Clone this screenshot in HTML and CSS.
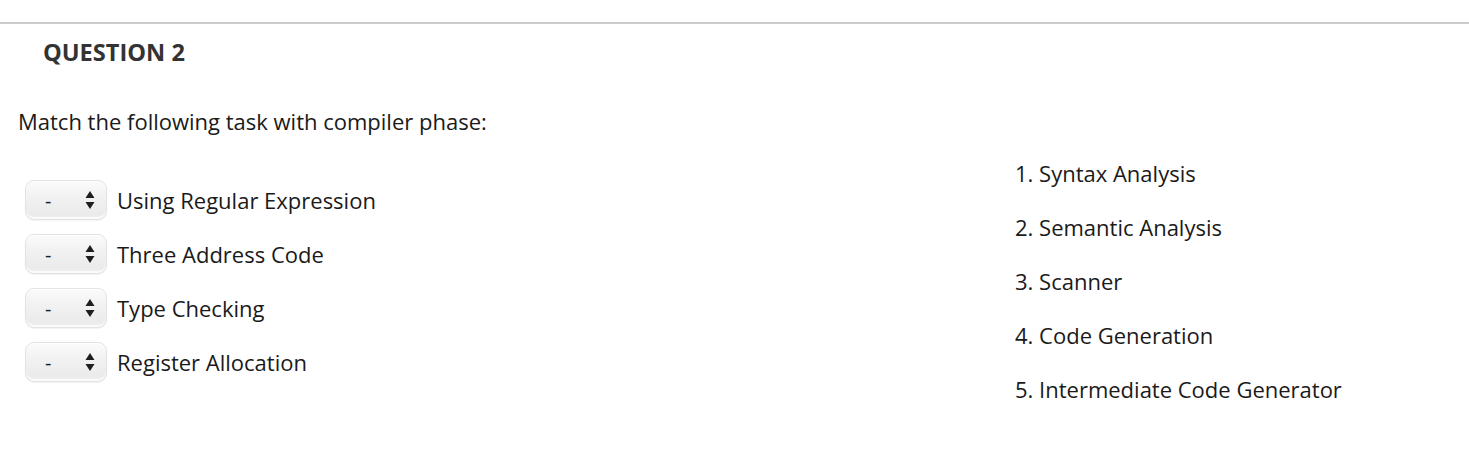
FILE: index.html
```html
<!DOCTYPE html>
<html>
<head>
<meta charset="utf-8">
<link rel="stylesheet" href="styles.css">
</head>
<body>
<div class="page">
  <div class="divider"></div>
  <h2 class="q-title">QUESTION 2</h2>
  <p class="q-text">Match the following task with compiler phase:</p>
  <div class="match">
    <div class="left">
      <div class="row"><div class="sel"><span class="dash">-</span><svg class="arrows" width="10" height="20" viewBox="0 0 10 20"><path d="M5 1 L9.5 8 L0.5 8 Z M5 19 L9.5 12 L0.5 12 Z" fill="#1e1e1e"/></svg></div><span class="label">Using Regular Expression</span></div>
      <div class="row"><div class="sel"><span class="dash">-</span><svg class="arrows" width="10" height="20" viewBox="0 0 10 20"><path d="M5 1 L9.5 8 L0.5 8 Z M5 19 L9.5 12 L0.5 12 Z" fill="#1e1e1e"/></svg></div><span class="label">Three Address Code</span></div>
      <div class="row"><div class="sel"><span class="dash">-</span><svg class="arrows" width="10" height="20" viewBox="0 0 10 20"><path d="M5 1 L9.5 8 L0.5 8 Z M5 19 L9.5 12 L0.5 12 Z" fill="#1e1e1e"/></svg></div><span class="label">Type Checking</span></div>
      <div class="row"><div class="sel"><span class="dash">-</span><svg class="arrows" width="10" height="20" viewBox="0 0 10 20"><path d="M5 1 L9.5 8 L0.5 8 Z M5 19 L9.5 12 L0.5 12 Z" fill="#1e1e1e"/></svg></div><span class="label">Register Allocation</span></div>
    </div>
    <ol class="right">
      <li>1. Syntax Analysis</li>
      <li>2. Semantic Analysis</li>
      <li>3. Scanner</li>
      <li>4. Code Generation</li>
      <li>5. Intermediate Code Generator</li>
    </ol>
  </div>
</div>
</body>
</html>
```
FILE: styles.css
```css
html, body {
  margin: 0;
  padding: 0;
  background: #fff;
}
body {
  font-family: "Open Sans", "Noto Sans", sans-serif;
  color: #1a1a1a;
}
.page {
  padding-top: 22px;
}
.divider {
  height: 2px;
  background: #cccccc;
}
.q-title {
  margin: 0;
  padding: 13px 0 0 43px;
  font-size: 23.6px;
  line-height: 30px;
  font-weight: 700;
  color: #333;
}
.q-text {
  margin: 0;
  padding: 39px 0 0 18px;
  font-size: 22px;
  line-height: 30px;
  color: #1a1a1a;
}
.match {
  display: flex;
  padding-top: 10px;
}
.left {
  width: 1015px;
  padding-top: 27px;
  box-sizing: border-box;
  padding-left: 25px;
}
.row {
  display: flex;
  align-items: center;
  height: 54px;
}
.sel {
  width: 82px;
  height: 40px;
  box-sizing: border-box;
  border: 1px solid #e2e2e2;
  border-radius: 9px;
  background: linear-gradient(#fbfbfb, #f2f2f2 40%, #ebebeb 85%, #efefef);
  box-shadow: inset 0 -2px 0 #fbfbfb, inset 0 1px 0 #fff, 0 1px 1px rgba(0,0,0,0.05);
  display: flex;
  align-items: center;
  padding: 0 0 0 19px;
  margin-right: 10px;
}
.dash {
  font-size: 20px;
  color: #1e1e1e;
  width: 40px;
}
.arrows {
  display: block;
}
.label {
  font-size: 22px;
  color: #1a1a1a;
}
.right {
  list-style: none;
  margin: 0;
  padding: 0;
}
.right li {
  height: 54px;
  display: flex;
  align-items: center;
  font-size: 22px;
  color: #1a1a1a;
}
```
